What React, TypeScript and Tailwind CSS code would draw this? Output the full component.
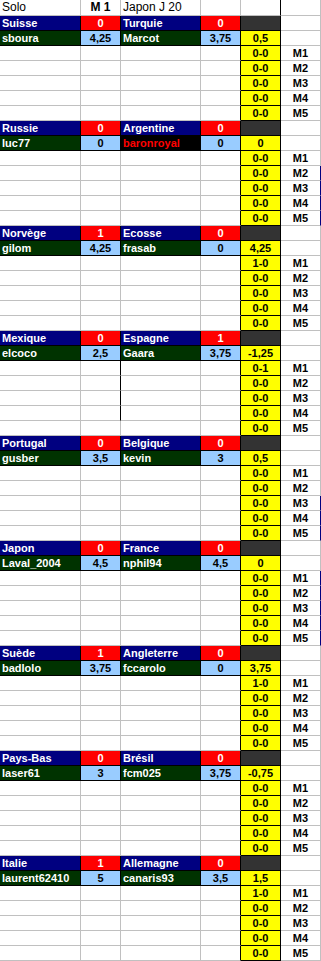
import React from 'react'

type Match = {
    home: string
    homeScore: number
    away: string
    awayScore: number
    homePlayer: string
    homePts: string
    awayPlayer: string
    awayPts: string
    diff: string
    results: string[]
    awayRed?: boolean
}

const matches: Match[] = [
    { home: 'Suisse', homeScore: 0, away: 'Turquie', awayScore: 0, homePlayer: 'sboura', homePts: '4,25', awayPlayer: 'Marcot', awayPts: '3,75', diff: '0,5', results: ['0-0', '0-0', '0-0', '0-0', '0-0'] },
    { home: 'Russie', homeScore: 0, away: 'Argentine', awayScore: 0, homePlayer: 'luc77', homePts: '0', awayPlayer: 'baronroyal', awayPts: '0', diff: '0', results: ['0-0', '0-0', '0-0', '0-0', '0-0'], awayRed: true },
    { home: 'Norvège', homeScore: 1, away: 'Ecosse', awayScore: 0, homePlayer: 'gilom', homePts: '4,25', awayPlayer: 'frasab', awayPts: '0', diff: '4,25', results: ['1-0', '0-0', '0-0', '0-0', '0-0'] },
    { home: 'Mexique', homeScore: 0, away: 'Espagne', awayScore: 1, homePlayer: 'elcoco', homePts: '2,5', awayPlayer: 'Gaara', awayPts: '3,75', diff: '-1,25', results: ['0-1', '0-0', '0-0', '0-0', '0-0'] },
    { home: 'Portugal', homeScore: 0, away: 'Belgique', awayScore: 0, homePlayer: 'gusber', homePts: '3,5', awayPlayer: 'kevin', awayPts: '3', diff: '0,5', results: ['0-0', '0-0', '0-0', '0-0', '0-0'] },
    { home: 'Japon', homeScore: 0, away: 'France', awayScore: 0, homePlayer: 'Laval_2004', homePts: '4,5', awayPlayer: 'nphil94', awayPts: '4,5', diff: '0', results: ['0-0', '0-0', '0-0', '0-0', '0-0'] },
    { home: 'Suède', homeScore: 1, away: 'Angleterre', awayScore: 0, homePlayer: 'badlolo', homePts: '3,75', awayPlayer: 'fccarolo', awayPts: '0', diff: '3,75', results: ['1-0', '0-0', '0-0', '0-0', '0-0'] },
    { home: 'Pays-Bas', homeScore: 0, away: 'Brésil', awayScore: 0, homePlayer: 'laser61', homePts: '3', awayPlayer: 'fcm025', awayPts: '3,75', diff: '-0,75', results: ['0-0', '0-0', '0-0', '0-0', '0-0'] },
    { home: 'Italie', homeScore: 1, away: 'Allemagne', awayScore: 0, homePlayer: 'laurent62410', homePts: '5', awayPlayer: 'canaris93', awayPts: '3,5', diff: '1,5', results: ['1-0', '0-0', '0-0', '0-0', '0-0'] },
]

const ROW = 'grid grid-cols-[81px_40px_80px_40px_40px_40px] h-[15px]'
const CELL = 'box-border border-r border-b whitespace-nowrap overflow-hidden px-[2px] text-[11px] leading-[14px] font-bold'
const GRAY = 'border-r-[#c0c0c0] border-b-[#c0c0c0]'
const DARK = 'border-r-black border-b-black'

function Cell({ children, className = '' }: { children?: React.ReactNode; className?: string }) {
    return <div className={`${CELL} ${className}`}>{children}</div>
}

function Block({ m, index }: { m: Match; index: number }) {
    return (
        <>
            {/* team row */}
            <div className={ROW}>
                <Cell className={`${DARK} bg-[#000080] text-white`}>{m.home}</Cell>
                <Cell className={`${DARK} bg-[#ff0000] text-white text-center`}>{m.homeScore}</Cell>
                <Cell className={`${DARK} bg-[#000080] text-white`}>{m.away}</Cell>
                <Cell className={`${DARK} bg-[#ff0000] text-white text-center`}>{m.awayScore}</Cell>
                <Cell className={`${DARK} bg-[#333333]`} />
                <Cell className={`${GRAY} bg-white`} />
            </div>
            {/* players row */}
            <div className={ROW}>
                <Cell className={`${DARK} bg-[#003300] text-white`}>{m.homePlayer}</Cell>
                <Cell className={`${DARK} bg-[#99ccff] text-black text-center`}>{m.homePts}</Cell>
                {m.awayRed ? (
                    <Cell className={`${DARK} bg-black text-[#ff0000]`}>{m.awayPlayer}</Cell>
                ) : (
                    <Cell className={`${DARK} bg-[#003300] text-white`}>{m.awayPlayer}</Cell>
                )}
                <Cell className={`${DARK} bg-[#99ccff] text-black text-center`}>{m.awayPts}</Cell>
                <Cell className={`${DARK} bg-[#ffff00] text-black text-center`}>{m.diff}</Cell>
                <Cell className={`${GRAY} bg-white`} />
            </div>
            {/* match rows */}
            {m.results.map((r, i) => {
                const blackB = index === 3 && i < 4
                const navyEdge = (index === 1 && i >= 1) || (index === 4 && i >= 2) || index === 5
                return (
                    <div key={i} className={ROW}>
                        <Cell className={`${GRAY} bg-white`} />
                        <Cell className={`${blackB ? 'border-r-black border-b-[#c0c0c0]' : GRAY} bg-white`} />
                        <Cell className={`${GRAY} bg-white`} />
                        <Cell className="border-r-black border-b-[#c0c0c0] bg-white" />
                        <Cell className={`${DARK} bg-[#ffff00] text-black text-center`}>{r}</Cell>
                        <Cell className={`${navyEdge ? 'border-r-[#000080] border-b-[#c0c0c0]' : GRAY} bg-white text-black text-center`}>
                            M{i + 1}
                        </Cell>
                    </div>
                )
            })}
        </>
    )
}

export default function App() {
    return (
        <div className="w-[321px] bg-white font-['Liberation_Sans',Arial,sans-serif] text-black">
            {/* header row */}
            <div className="grid grid-cols-[81px_40px_80px_40px_40px_40px] h-[16px]">
                <div className={`${GRAY} box-border border-r border-b px-[2px] text-[12px] leading-[15px]`}>Solo</div>
                <div className={`${GRAY} box-border border-r border-b text-center text-[12px] leading-[15px] font-bold`}>M 1</div>
                <div className={`${GRAY} box-border border-r border-b whitespace-nowrap px-[2px] text-[12px] leading-[15px]`}>Japon J 20</div>
                <div className={`${GRAY} box-border border-r border-b`} />
                <div className="box-border border-r border-b border-r-black border-b-[#c0c0c0]" />
                <div className={`${GRAY} box-border border-r border-b`} />
            </div>
            {matches.map((m, i) => (
                <Block key={m.home} m={m} index={i} />
            ))}
        </div>
    )
}
